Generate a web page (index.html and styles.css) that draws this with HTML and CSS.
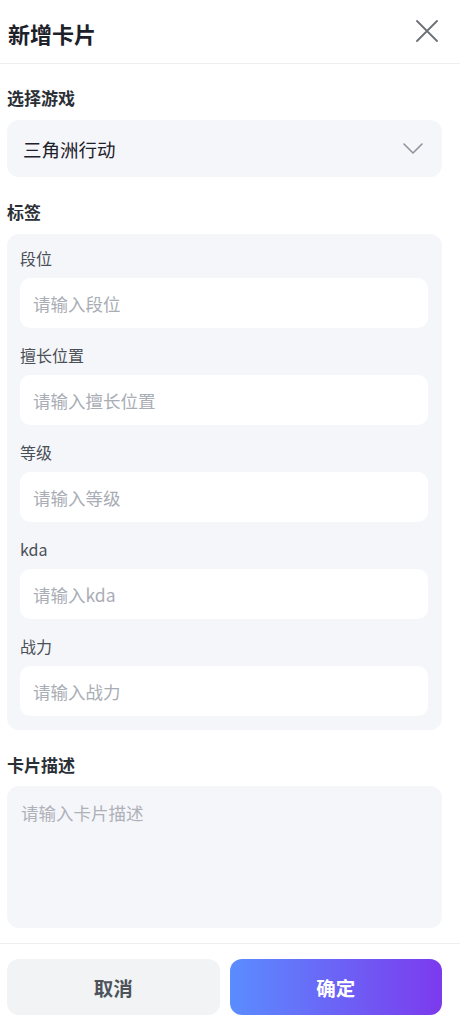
FILE: index.html
```html
<!DOCTYPE html>
<html lang="zh-CN">
<head>
<meta charset="utf-8">
<title>新增卡片</title>
<link rel="stylesheet" href="styles.css">
</head>
<body>
<div class="sheet">
  <header class="header">
    <h1 class="title">新增卡片</h1>
    <button class="close" type="button" aria-label="关闭">
      <svg width="22" height="22" viewBox="0 0 22 22"><path d="M1 1L21 21M21 1L1 21" stroke="#6b6f76" stroke-width="1.8" fill="none" stroke-linecap="round"/></svg>
    </button>
  </header>
  <main class="body">
    <div class="sec-label">选择游戏</div>
    <div class="select">
      <span class="select-value">三角洲行动</span>
      <svg class="chev" width="20" height="11" viewBox="0 0 20 11"><path d="M1 1L10 10L19 1" stroke="#8f949c" stroke-width="1.6" fill="none" stroke-linecap="round" stroke-linejoin="round"/></svg>
    </div>

    <div class="sec-label gap-top">标签</div>
    <div class="tags">
      <div class="field">
        <div class="field-label">段位</div>
        <input class="field-input" placeholder="请输入段位">
      </div>
      <div class="field">
        <div class="field-label">擅长位置</div>
        <input class="field-input" placeholder="请输入擅长位置">
      </div>
      <div class="field">
        <div class="field-label">等级</div>
        <input class="field-input" placeholder="请输入等级">
      </div>
      <div class="field">
        <div class="field-label">kda</div>
        <input class="field-input" placeholder="请输入kda">
      </div>
      <div class="field">
        <div class="field-label">战力</div>
        <input class="field-input" placeholder="请输入战力">
      </div>
    </div>

    <div class="sec-label gap-top">卡片描述</div>
    <textarea class="desc" placeholder="请输入卡片描述"></textarea>
  </main>
  <footer class="footer">
    <button class="btn btn-cancel" type="button">取消</button>
    <button class="btn btn-ok" type="button">确定</button>
  </footer>
</div>
</body>
</html>
```
FILE: styles.css
```css
* { box-sizing: border-box; }
html, body {
  margin: 0;
  padding: 0;
  background: #ffffff;
  font-family: "Noto Sans CJK SC", "Noto Sans", sans-serif;
  color: #1d2129;
}
.sheet {
  width: 460px;
  height: 1024px;
  display: flex;
  flex-direction: column;
}
.header {
  height: 64px;
  display: flex;
  align-items: center;
  justify-content: space-between;
  padding: 0 22px 0 8px;
  border-bottom: 1px solid #eeeff2;
}
.title {
  margin: 0;
  font-size: 22px;
  line-height: 30px;
  font-weight: 700;
  color: #1d2129;
  transform: translateY(1px);
}
.close {
  border: 0;
  background: transparent;
  padding: 0;
  width: 22px;
  height: 22px;
  display: flex;
  margin-top: -2px;
}
.body {
  flex: 1;
  padding: 22px 18px 0 7px;
  display: flex;
  flex-direction: column;
}
.sec-label {
  font-size: 17px;
  line-height: 24px;
  font-weight: 700;
  color: #2b2f36;
  margin-bottom: 10px;
}
.gap-top { margin-top: 23px; }
.select {
  height: 57px;
  background: #f5f6fa;
  border-radius: 12px;
  display: flex;
  align-items: center;
  justify-content: space-between;
  padding: 0 19px 0 16px;
}
.select-value {
  font-size: 18.5px;
  color: #1d2129;
  line-height: 26px;
}
.chev { margin-top: -1px; }
.tags {
  background: #f5f6fa;
  border-radius: 12px;
  padding: 13px 14px 14px 13px;
  display: flex;
  flex-direction: column;
  gap: 16px;
}
.field-label {
  font-size: 16px;
  line-height: 22px;
  font-weight: 400;
  color: #4a4f57;
  margin-bottom: 9px;
}
.field-input {
  display: block;
  width: 100%;
  height: 50px;
  border: 0;
  outline: none;
  background: #ffffff;
  border-radius: 10px;
  padding: 0 13px;
  font-family: "Noto Sans CJK SC", "Noto Sans", sans-serif;
  font-size: 17.5px;
  color: #1d2129;
}
.field-input::placeholder { color: #a9adb5; }
.desc {
  display: block;
  width: 100%;
  height: 142px;
  margin-top: -1px;
  border: 0;
  outline: none;
  resize: none;
  background: #f5f6fa;
  border-radius: 12px;
  padding: 15px 14px;
  font-family: "Noto Sans CJK SC", "Noto Sans", sans-serif;
  font-size: 17.5px;
  line-height: 24px;
  color: #1d2129;
}
.desc::placeholder { color: #aeb1b8; }
.footer {
  height: 81px;
  border-top: 1px solid #eeeff2;
  padding: 15px 18px 0 7px;
  display: flex;
  gap: 10px;
  align-items: flex-start;
}
.btn {
  flex: 1;
  height: 56px;
  border: 0;
  border-radius: 12px;
  font-family: "Noto Sans CJK SC", "Noto Sans", sans-serif;
  font-size: 19.5px;
  font-weight: 700;
}
.btn-cancel {
  background: #f2f3f5;
  color: #4e535b;
}
.btn-ok {
  background: linear-gradient(90deg, #5a8dff 0%, #7c3aed 100%);
  color: #ffffff;
}
```
